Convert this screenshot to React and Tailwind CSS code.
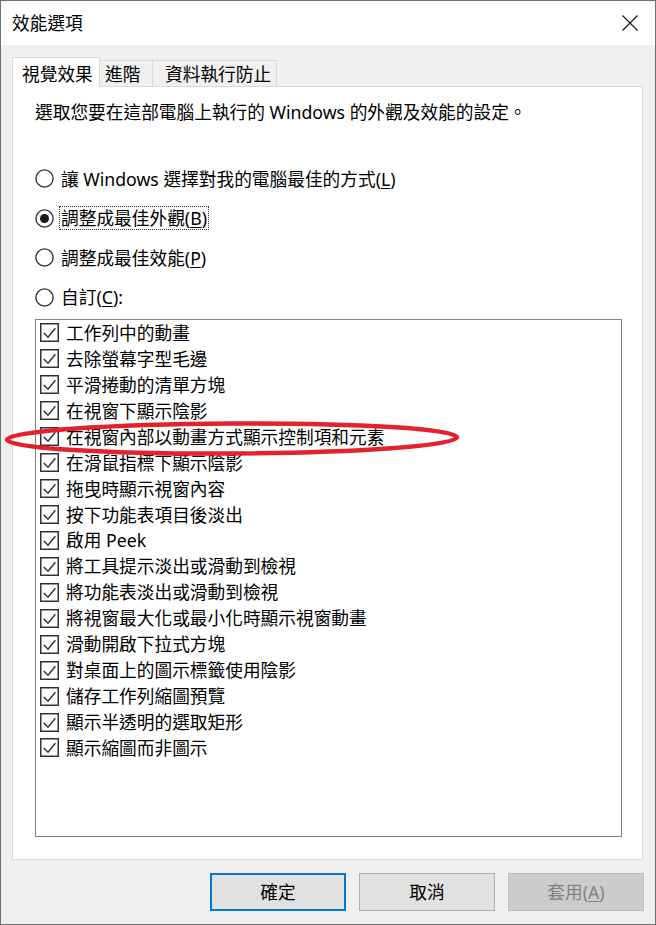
import React from "react";

const effects = [
  "工作列中的動畫",
  "去除螢幕字型毛邊",
  "平滑捲動的清單方塊",
  "在視窗下顯示陰影",
  "在視窗內部以動畫方式顯示控制項和元素",
  "在滑鼠指標下顯示陰影",
  "拖曳時顯示視窗內容",
  "按下功能表項目後淡出",
  "啟用 Peek",
  "將工具提示淡出或滑動到檢視",
  "將功能表淡出或滑動到檢視",
  "將視窗最大化或最小化時顯示視窗動畫",
  "滑動開啟下拉式方塊",
  "對桌面上的圖示標籤使用陰影",
  "儲存工作列縮圖預覽",
  "顯示半透明的選取矩形",
  "顯示縮圖而非圖示",
];

const radios = [
  { label: "讓 Windows 選擇對我的電腦最佳的方式", key: "L" },
  { label: "調整成最佳外觀", key: "B", checked: true },
  { label: "調整成最佳效能", key: "P" },
  { label: "自訂", key: "C", colon: true },
];

function Radio({ checked }) {
  return (
    <svg width="19" height="19" viewBox="0 0 19 19" className="shrink-0">
      <circle cx="9.5" cy="9.5" r="8.6" fill="white" stroke="#333" strokeWidth="1.4" />
      {checked && <circle cx="9.5" cy="9.5" r="4.5" fill="#1a1a1a" />}
    </svg>
  );
}

function Checkbox() {
  return (
    <svg width="19" height="19" viewBox="0 0 19 19" className="shrink-0">
      <rect x="0.75" y="0.75" width="17.5" height="17.5" fill="white" stroke="#333" strokeWidth="1.5" />
      <polyline points="3.8,10 8,14.2 15.4,5.2" fill="none" stroke="#333" strokeWidth="1.5" />
    </svg>
  );
}

export default function App() {
  return (
    <div className="relative w-[656px] h-[925px] bg-[#f0f0f0] border border-[#6f6f6f] flex flex-col text-black text-[17.7px] font-['Noto_Sans','Noto_Sans_CJK_TC',sans-serif]">
      {/* title bar */}
      <div className="h-[44px] bg-white flex items-center justify-between pl-[11px] pr-[17px]">
        <span className="leading-[24px]">效能選項</span>
        <svg width="16" height="16" viewBox="0 0 16 16">
          <path d="M0.5 0.5 L15.5 15.5 M15.5 0.5 L0.5 15.5" stroke="#111" strokeWidth="1.1" />
        </svg>
      </div>

      {/* tabs */}
      <div className="relative z-10 flex items-end ml-[11px] mt-[12px] h-[30px] -mb-[1px]">
        <div className="h-[30px] w-[88px] bg-white border border-b-0 border-[#d9d9d9] pl-[9px] flex items-center pt-[2px] leading-[24px]">
          視覺效果
        </div>
        <div className="h-[26px] w-[53px] mb-[1px] border border-l-0 border-b-0 border-[#d9d9d9] pl-[5px] flex items-center pt-[1px] leading-[24px]">
          進階
        </div>
        <div className="h-[26px] w-[124px] mb-[1px] border border-l-0 border-b-0 border-[#d9d9d9] pl-[12px] flex items-center pt-[1px] leading-[24px]">
          資料執行防止
        </div>
      </div>

      {/* panel */}
      <div className="ml-[11px] mr-[12px] h-[774px] bg-white border border-[#d9d9d9] pl-[22px] pr-[20px] pt-[13px] flex flex-col">
        <p className="leading-[24px]">選取您要在這部電腦上執行的 Windows 的外觀及效能的設定。</p>

        <div className="mt-[35px] flex flex-col">
          {radios.map((r) => (
            <div key={r.key} className="h-[39.5px] flex items-center gap-[6px]">
              <Radio checked={r.checked} />
              <span
                className={
                  "leading-[22px] px-[1px] " +
                  (r.checked ? "outline outline-1 outline-dotted outline-[#333] -outline-offset-0" : "")
                }
              >
                {r.label}(<span className="underline underline-offset-2">{r.key}</span>){r.colon ? ":" : ""}
              </span>
            </div>
          ))}
        </div>

        <div className="mt-[2px] h-[518px] border border-[#828282] pl-[4px] flex flex-col">
          {effects.map((e) => (
            <div key={e} className="h-[25.95px] flex items-center gap-[7px] shrink-0">
              <Checkbox />
              <span className="leading-[22px] whitespace-nowrap">{e}</span>
            </div>
          ))}
        </div>
      </div>

      {/* buttons */}
      <div className="mt-[13px] mr-[11px] flex justify-end gap-[13px]">
        <button className="w-[136px] h-[38px] bg-[#e1e1e1] border-2 border-[#0078d7] leading-[24px]">確定</button>
        <button className="w-[136px] h-[38px] bg-[#e1e1e1] border border-[#adadad] leading-[24px]">取消</button>
        <button className="w-[136px] h-[38px] bg-[#cccccc] border border-[#bfbfbf] text-[#838383] leading-[24px]">
          套用(<span className="underline underline-offset-2">A</span>)
        </button>
      </div>

      {/* red annotation ellipse */}
      <svg className="absolute left-0 top-0 pointer-events-none" width="656" height="925">
        <ellipse cx="231" cy="437.5" rx="225" ry="15" fill="none" stroke="#e3222b" strokeWidth="4.5" transform="rotate(-0.3 231 437.5)" />
      </svg>
    </div>
  );
}
